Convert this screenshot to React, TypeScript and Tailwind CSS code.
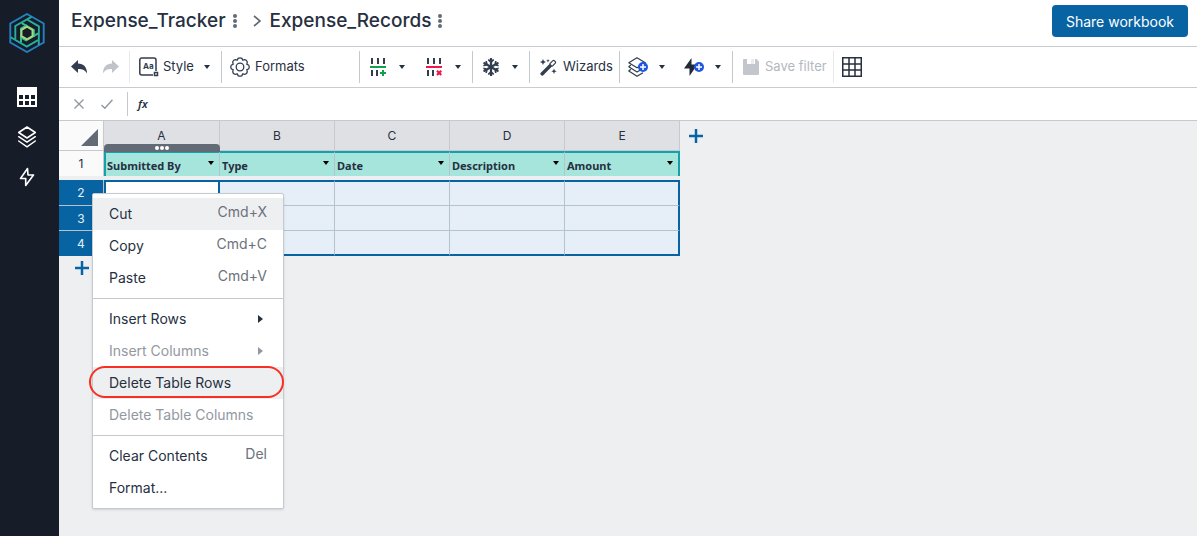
import React from 'react';
import { FaSnowflake } from 'react-icons/fa';

const COLUMNS = ['Submitted By', 'Type', 'Date', 'Description', 'Amount'];
const LETTERS = ['A', 'B', 'C', 'D', 'E'];
const ROWS = [2, 3, 4];

interface MenuEntry {
  label: string;
  shortcut?: string;
  submenu?: boolean;
  disabled?: boolean;
  active?: boolean;
  marked?: boolean;
}

const MENU: MenuEntry[][] = [
  [
    { label: 'Cut', shortcut: 'Cmd+X', active: true },
    { label: 'Copy', shortcut: 'Cmd+C' },
    { label: 'Paste', shortcut: 'Cmd+V' },
  ],
  [
    { label: 'Insert Rows', submenu: true },
    { label: 'Insert Columns', submenu: true, disabled: true },
    { label: 'Delete Table Rows', active: true, marked: true },
    { label: 'Delete Table Columns', disabled: true },
  ],
  [{ label: 'Clear Contents', shortcut: 'Del' }, { label: 'Format...' }],
];

const Logo = () => (
  <svg width="36" height="40" viewBox="0 0 36 40" fill="none" strokeWidth="1.9">
    <path d="M18 1L34.700 10.500V29.500L18 39L1.300 29.500V10.500Z" stroke="#2580c0" />
    {[0, 120, 240].map((angle) => (
      <g key={angle} transform={`rotate(${angle} 18 20)`}>
        <path d="M22.500 3.800L6.300 13V26" stroke="#27ad9f" />
        <path d="M12 29.500V15.500L18 12" stroke="#38bd8b" />
      </g>
    ))}
    <path d="M18 13.700L23.500 16.900V23.100L18 26.300L12.500 23.100V16.900Z" stroke="#a8d97f" fill="#161c28" />
  </svg>
);

const SheetIcon = () => (
  <svg width="20" height="20" viewBox="0 0 20 20">
    <path d="M0 0h20v20H0z" fill="#fff" />
    <path d="M2 8h4v4H2zM8 8h4v4H8zM14 8h4v4h-4zM2 14h4v4H2zM8 14h4v4H8zM14 14h4v4h-4z" fill="#161c28" />
  </svg>
);

const LayersIcon = () => (
  <svg width="20" height="22" viewBox="0 0 20 22" fill="none" stroke="#fff" strokeWidth="1.500" strokeLinejoin="round" strokeLinecap="round">
    <path d="M10 1l8.300 5.500L10 12 1.700 6.500z" />
    <path d="M1.700 10.700L10 16.200l8.300-5.500M1.700 15L10 20.800 18.300 15" />
  </svg>
);

const BoltIcon = () => (
  <svg width="16" height="20" viewBox="0 0 16 20" fill="none" stroke="#fff" strokeWidth="1.600" strokeLinejoin="round">
    <path d="M8.500 1.500L1.500 11.500h5.200v7L14.500 8H9z" />
  </svg>
);

const ArrowIcon = ({ flip = false }: { flip?: boolean }) => (
  <svg width="16" height="14" viewBox="0 0 16 14" className={flip ? '-scale-x-100' : ''} fill="currentColor">
    <path d="M0 6.500L7 0v3.600c5.500.2 9 3.400 9 9.900-1.600-3.200-4.200-4.500-9-4.500v4z" />
  </svg>
);

const StyleIcon = () => (
  <svg width="20" height="20" viewBox="0 0 20 20" fill="none" stroke="#323d4f" strokeWidth="1.500">
    <path d="M14 18H2.800A2 2 0 0 1 .8 16V3a2 2 0 0 1 2-2H15a2 2 0 0 1 2 2v11" />
    <path d="M15.500 15.500h3v3h-3z" />
    <text x="4" y="12" fontFamily="Inter, sans-serif" fontSize="8" fontWeight="700" fill="#323d4f" stroke="none">Aa</text>
  </svg>
);

const GearIcon = () => (
  <svg width="20" height="20" viewBox="0 0 20 20" fill="none" stroke="#323d4f" strokeWidth="1.300" strokeLinejoin="round">
    <path d="M8 1.400Q10 .2 12 1.400L12.700 3.200 14.800 2.700Q17 3 17.300 5.200L16.800 7.300 18.600 8Q19.800 10 18.600 12L16.800 12.700 17.300 14.800Q17 17 14.800 17.300L12.700 16.800 12 18.600Q10 19.800 8 18.600L7.300 16.800 5.200 17.300Q3 17 2.700 14.800L3.200 12.700 1.400 12Q.2 10 1.400 8L3.200 7.300 2.700 5.200Q3 3 5.200 2.700L7.300 3.200z" />
    <circle cx="10" cy="10" r="3.800" />
  </svg>
);

const RowInsertIcon = () => (
  <svg width="16" height="18" viewBox="0 0 16 18">
    <path d="M1 0h2v6H1zM7 0h2v6H7zM13 0h2v6h-2zM1 12h2v6H1zM6 12h2v6H6z" fill="#323d4f" />
    <path d="M0 8h16v2H0zM12 12h2v2h2v2h-2v2h-2v-2h-2v-2h2z" fill="#11a04b" />
  </svg>
);

const RowDeleteIcon = () => (
  <svg width="16" height="18" viewBox="0 0 16 18">
    <path d="M1 0h2v6H1zM7 0h2v6H7zM13 0h2v6h-2zM1 12h2v6H1zM6 12h2v6H6z" fill="#323d4f" />
    <path d="M0 8h16v2H0z" fill="#f31649" />
    <path d="M11 12.700l4.300 4.300M15.300 12.700L11 17" stroke="#f31649" strokeWidth="2.200" />
  </svg>
);

const WandIcon = () => (
  <svg width="17" height="17" viewBox="0 0 17 17" fill="#323d4f">
    <path d="M.6 14L10 4.600 12.400 7 3 16.400a1 1 0 0 1-1.400 0l-1-1a1 1 0 0 1 0-1.400z" />
    <path d="M9.700 4.900l3.200-3.200a1 1 0 0 1 1.400 0l1 1a1 1 0 0 1 0 1.400l-3.200 3.200" fill="none" stroke="#323d4f" strokeWidth="1.200" />
    <path d="M3 0l.9 2.100L6 3l-2.100.9L3 6l-.9-2.100L0 3l2.100-.9zM8 0l.5 1.300L9.800 1.800l-1.300.5L8 3.600l-.5-1.300-1.300-.5 1.300-.5zM14 9.500l.8 1.900 1.900.8-1.900.8-.8 1.900-.8-1.900-1.900-.8 1.900-.8z" />
  </svg>
);

const AddLayerIcon = () => (
  <svg width="20" height="20" viewBox="0 0 20 20" fill="none">
    <g stroke="#323d4f" strokeWidth="1.200" strokeLinejoin="round">
      <path d="M9 .7l8.300 5L9 10.800.8 5.700z" />
      <path d="M2.800 8L.8 9.700 9 15l3-1.800M2.800 12.200l-2 1.800L9 19.300l6-3.600" />
    </g>
    <circle cx="15" cy="10" r="5" fill="#1f56e0" />
    <path d="M15 7v6M12 10h6" stroke="#fff" strokeWidth="1.500" />
  </svg>
);

const AddActionIcon = () => (
  <svg width="20" height="18" viewBox="0 0 20 18" fill="none">
    <path d="M7.500 0L0 10.500h5.500V18L11 10V6.500H7.500z" fill="#1f2937" />
    <circle cx="15" cy="9" r="5" fill="#1f56e0" />
    <path d="M15 6v6M12 9h6" stroke="#fff" strokeWidth="1.500" />
  </svg>
);

const SaveIcon = () => (
  <svg width="16" height="16" viewBox="0 0 16 16" fill="#c3c7cd">
    <path d="M1 0h3v5h8V0h1.500L16 2.500V15a1 1 0 0 1-1 1H1a1 1 0 0 1-1-1V1a1 1 0 0 1 1-1z" />
    <path d="M8 0h3v5H8z" fill="#e9ebed" />
  </svg>
);

const GridIcon = () => (
  <svg width="20" height="20" viewBox="0 0 20 20" fill="none" stroke="#27303f" strokeWidth="1.500">
    <rect x="0.750" y="0.750" width="18.500" height="18.500" />
    <path d="M7 1v18M13 1v18M1 7h18M1 13h18" />
  </svg>
);

const Caret = () => (
  <svg width="6" height="4" viewBox="0 0 6 4" className="shrink-0" fill="currentColor">
    <path d="M0 0h6L3 4z" />
  </svg>
);

const PlusIcon = () => (
  <svg width="14" height="14" viewBox="0 0 14 14" stroke="#0863a3" strokeWidth="2.500">
    <path d="M7 0v14M0 7h14" />
  </svg>
);

const Dots = () => (
  <svg width="4" height="14" viewBox="0 0 4 14" fill="#626b75">
    <circle cx="2" cy="2" r="2" />
    <circle cx="2" cy="7" r="2" />
    <circle cx="2" cy="12" r="2" />
  </svg>
);

const Separator = ({ light = false }: { light?: boolean }) => (
  <div className={`h-8 w-px shrink-0 ${light ? 'bg-[#e6e8eb]' : 'bg-[#c5c9d0]'}`} />
);

const Sidebar = () => (
  <nav className="flex w-[59px] shrink-0 flex-col items-center bg-[#161c28] pr-[5px] pt-[13px]">
    <a href="#home" aria-label="Home"><Logo /></a>
    <div className="mt-[34px] flex flex-col items-center gap-[19px]">
      <a href="#sheets" aria-label="Workbooks"><SheetIcon /></a>
      <a href="#layers" aria-label="Tables"><LayersIcon /></a>
      <a href="#actions" aria-label="Automations"><BoltIcon /></a>
    </div>
  </nav>
);

const Header = () => (
  <header className="flex h-[47px] shrink-0 items-center border-b border-[#c8ccd2] pl-3 pr-[9px] pb-1">
    <h1 className="text-[19px] font-medium leading-6 text-[#27303f]">Expense_Tracker</h1>
    <button aria-label="Workbook menu" className="ml-[7px]"><Dots /></button>
    <svg width="8" height="12" viewBox="0 0 8 12" className="ml-4" fill="none" stroke="#626b75" strokeWidth="1.700">
      <path d="M1 1l6 5-6 5" />
    </svg>
    <h2 className="ml-[9px] text-[19px] font-medium leading-6 text-[#27303f]">Expense_Records</h2>
    <button aria-label="Sheet menu" className="ml-[7px]"><Dots /></button>
    <button className="ml-auto h-8 rounded-sm bg-[#0863a3] px-[14px] text-[14px] text-white">
      Share workbook
    </button>
  </header>
);

const Toolbar = () => (
  <div className="flex h-[41px] shrink-0 items-center border-b border-[#c8ccd2] pl-3 text-[13px] text-[#27303f]">
    <button aria-label="Undo" className="text-[#323d4f]"><ArrowIcon /></button>
    <button aria-label="Redo" className="ml-4 mr-[10px] text-[#c0c4ca]"><ArrowIcon flip /></button>
    <Separator light />
    <button className="flex w-[91px] items-center pl-[9px] pr-[11px]">
      <StyleIcon />
      <span className="ml-1">Style</span>
      <span className="ml-auto"><Caret /></span>
    </button>
    <Separator />
    <button className="flex w-[137px] items-center gap-[5px] pl-2">
      <GearIcon />
      Formats
    </button>
    <Separator />
    <button aria-label="Insert rows" className="flex w-14 items-center gap-[13px] pl-[10px]"><RowInsertIcon /><Caret /></button>
    <button aria-label="Delete rows" className="flex w-14 items-center gap-[13px] pl-[10px]"><RowDeleteIcon /><Caret /></button>
    <Separator />
    <button aria-label="Freeze" className="flex w-14 items-center gap-3 pl-[9px]">
      <FaSnowflake size={18} color="#323d4f" />
      <Caret />
    </button>
    <Separator />
    <button className="flex w-[89px] items-center gap-[6px] pl-[10px]">
      <WandIcon />
      Wizards
    </button>
    <Separator />
    <button aria-label="Add table" className="flex w-14 items-center gap-[11px] pl-2"><AddLayerIcon /><Caret /></button>
    <button aria-label="Add action" className="flex w-14 items-center gap-[11px] pl-2"><AddActionIcon /><Caret /></button>
    <Separator />
    <button disabled className="flex w-[100px] items-center gap-[6px] pl-[10px] text-[#b4b8be]">
      <SaveIcon />
      Save filter
    </button>
    <Separator light />
    <button aria-label="Gridlines" className="ml-2"><GridIcon /></button>
  </div>
);

const FormulaBar = () => (
  <div className="flex h-[33px] shrink-0 items-center pb-px pl-[15px]">
    <button aria-label="Cancel">
      <svg width="10" height="10" viewBox="0 0 10 10" stroke="#9298a0" strokeWidth="1.400"><path d="M.5.5l9 9M9.500.5l-9 9" /></svg>
    </button>
    <button aria-label="Accept" className="ml-[17px]">
      <svg width="12" height="10" viewBox="0 0 12 10" fill="none" stroke="#9298a0" strokeWidth="1.400"><path d="M.5 6l3.300 3.300L11.500.7" /></svg>
    </button>
    <div className="ml-[14px] h-6 w-px bg-[#c5c9d0]" />
    <label htmlFor="formula" className="ml-[10px] font-['Noto_Sans',sans-serif] text-[11px] font-semibold italic text-[#27303f]">fx</label>
    <input id="formula" className="ml-3 h-6 flex-1 bg-transparent outline-none" />
  </div>
);

const Sheet = () => (
  <table className="w-[621px] table-fixed border-separate border-spacing-0 text-left">
    <colgroup>
      <col className="w-[45px]" />
      <col className="w-[116px]" />
      <col className="w-[115px]" />
      <col className="w-[115px]" />
      <col className="w-[115px]" />
      <col className="w-[115px]" />
    </colgroup>
    <thead>
      <tr className="h-[30px]">
        <th className="border-b border-r border-[#c5c9d0] bg-[#fafafa] p-0">
          <svg width="17" height="17" viewBox="0 0 17 17" className="ml-[22px] mt-1"><path d="M17 0v17H0z" fill="#626b75" /></svg>
        </th>
        {LETTERS.map((letter) => (
          <th key={letter} className="relative border-b border-r border-[#c5c9d0] bg-[#dfe0e4] p-0 text-center text-[12px] font-normal text-[#27303f]">
            {letter}
            {letter === 'A' && (
              <span className="absolute -bottom-[2px] -right-px left-0 flex h-2 items-center justify-center gap-px rounded-t-[4px] bg-[#626b75]">
                <i className="size-1 rounded-full bg-white" />
                <i className="size-1 rounded-full bg-white" />
                <i className="size-1 rounded-full bg-white" />
              </span>
            )}
          </th>
        ))}
      </tr>
    </thead>
    <tbody>
      <tr className="h-[25px]">
        <th className="border-r border-[#c5c9d0] bg-[#fafafa] p-0 pt-px text-center text-[12px] font-normal text-[#27303f]">1</th>
        {COLUMNS.map((name, i) => (
          <td
            key={name}
            className={`border-t-2 bg-[#a5e5dc] p-0 ${i === 0 ? 'border-l-2 border-l-[#16a0ac] pl-px' : 'pl-[2px]'} ${
              i === 4 ? 'border-r-2 border-r-[#16a0ac]' : 'border-r border-r-[#b5c4cc]'
            } border-t-[#16a0ac]`}
          >
            <div className="flex h-[23px] items-start justify-between pr-[5px]">
              <span className="pt-[5px] font-['Noto_Sans',sans-serif] text-[11px] font-bold leading-4 text-[#27303f]">{name}</span>
              <button aria-label={`Filter ${name}`} className="pt-2 text-black"><Caret /></button>
            </div>
          </td>
        ))}
      </tr>
      <tr className="h-1"><td colSpan={6} className="p-0" /></tr>
      {ROWS.map((row) => (
        <tr key={row} className={row === 2 ? 'h-[26px]' : 'h-[25px]'}>
          <th
            className={`border-r border-[#b5c4cc] bg-[#0863a3] p-0 pt-px text-center text-[12px] font-normal text-[#e6eff7] ${
              row === 4 ? '' : 'border-b'
            }`}
          >
            {row}
          </th>
          {COLUMNS.map((name, i) => (
            <td
              key={name}
              className={`p-0 ${row === 2 && i === 0 ? 'bg-white' : 'bg-[#e6eff7]'} ${
                row === 2 ? 'border-t-2 border-t-[#0863a3]' : ''
              } ${row === 4 ? 'border-b-2 border-b-[#0863a3]' : 'border-b border-b-[#b5c4cc]'} ${
                i === 0 ? 'border-l-2 border-l-[#0863a3]' : ''
              } ${i === 4 || (row === 2 && i === 0) ? 'border-r-2 border-r-[#0863a3]' : 'border-r border-r-[#b5c4cc]'}`}
            />
          ))}
        </tr>
      ))}
    </tbody>
  </table>
);

const ContextMenu = () => (
  <div role="menu" className="absolute left-[33px] top-[72px] w-48 rounded-[2px] border border-[#c5c9d0] bg-white py-1 shadow-sm">
    {MENU.map((group, g) => (
      <div key={g} className={g > 0 ? 'mt-1 border-t border-[#c5c9d0] pt-1' : ''}>
        {group.map((item) => (
          <button
            key={item.label}
            role="menuitem"
            disabled={item.disabled}
            className={`relative flex h-8 w-full items-start justify-between px-4 text-[14px] ${
              item.active ? 'bg-[#eeeff1]' : ''
            } ${item.disabled ? 'text-[#9298a0]' : 'text-[#27303f]'}`}
          >
            <span className="leading-8">{item.label}</span>
            {item.shortcut && <span className="leading-7 text-[#6b727b]">{item.shortcut}</span>}
            {item.submenu && (
              <svg width="5" height="8" viewBox="0 0 5 8" className="mr-1 mt-3" fill="currentColor"><path d="M0 0l5 4-5 4z" /></svg>
            )}
            {item.marked && (
              <span className="absolute -left-1 -right-px -top-px h-8 rounded-full border-2 border-[#f92f24]" />
            )}
          </button>
        ))}
      </div>
    ))}
  </div>
);

export default function App() {
  return (
    <div className="flex min-h-screen bg-white font-['Inter',sans-serif]">
      <Sidebar />
      <div className="flex min-w-0 flex-1 flex-col">
        <Header />
        <Toolbar />
        <FormulaBar />
        <main className="relative flex-1 bg-[#eeeff1] shadow-[0_-1px_0_#c5c9d0]">
          <div className="flex items-start">
            <Sheet />
            <button aria-label="Add column" className="ml-[9px] mt-2"><PlusIcon /></button>
          </div>
          <button aria-label="Add row" className="ml-4 mt-[5px]"><PlusIcon /></button>
          <ContextMenu />
        </main>
      </div>
    </div>
  );
}
